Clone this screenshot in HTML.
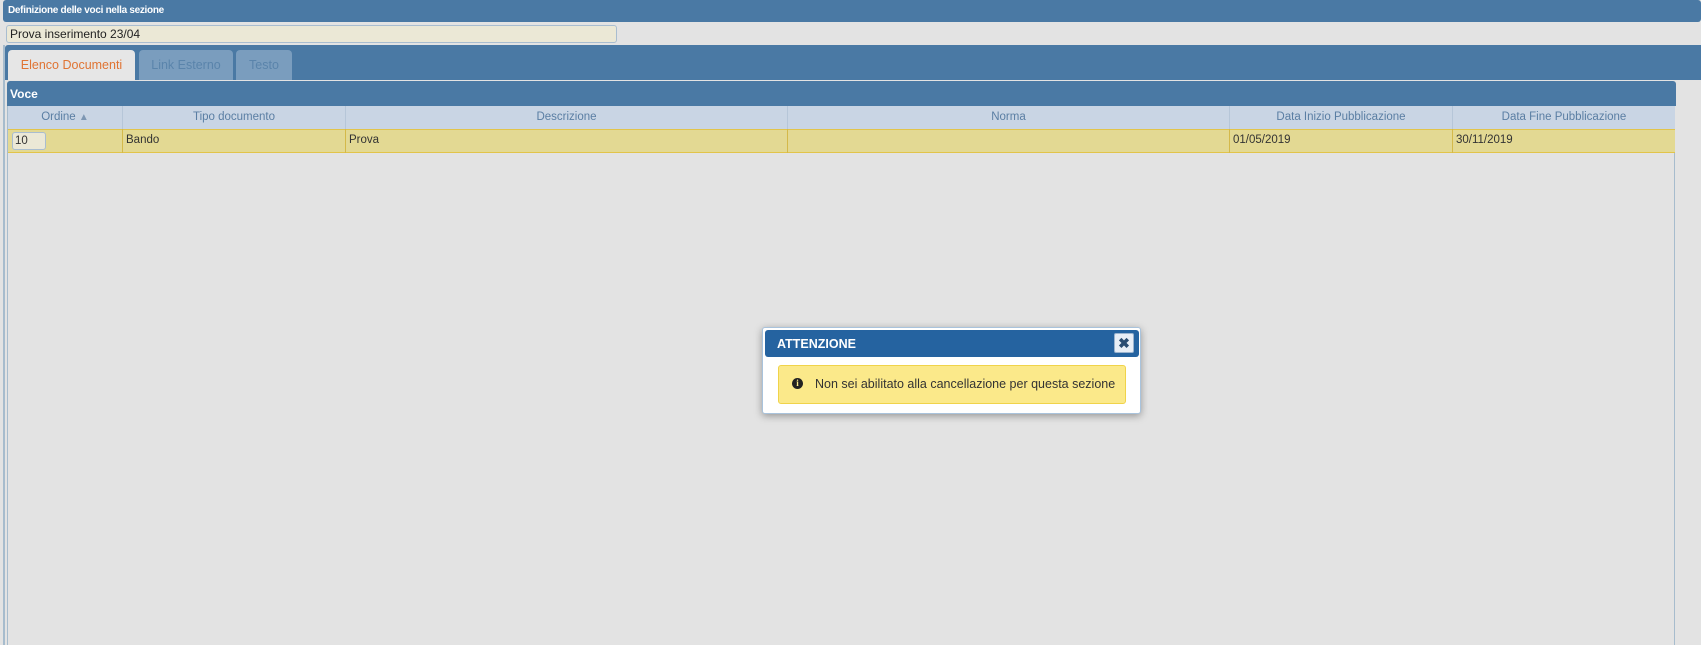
<!DOCTYPE html>
<html><head><meta charset="utf-8"><style>
*{box-sizing:border-box;margin:0;padding:0}
body{width:1701px;height:645px;background:#e3e3e3;font-family:"Liberation Sans",sans-serif;font-size:12px;color:#333;position:relative;overflow:hidden}
.abs{position:absolute}
.blue{background:#4a79a4}
</style></head><body>
<div class="abs blue" style="left:3px;top:0;width:1698px;height:22px;border-radius:3px"></div>
<div class="abs" style="left:8px;top:5px;color:#fff;font-size:10px;font-weight:bold;letter-spacing:-0.3px">Definizione delle voci nella sezione</div>
<div class="abs" style="left:6px;top:25px;width:611px;height:18px;background:#ebe8d6;border:1px solid #a9bdd0;border-radius:3px;padding:1px 3px;font-size:12px;color:#222">Prova inserimento 23/04</div>
<div class="abs" style="left:3px;top:45px;width:2px;height:600px;background:#a7bccd"></div>
<div class="abs" style="left:7px;top:93px;width:1px;height:552px;background:#a7bccd"></div>
<div class="abs" style="left:1674px;top:93px;width:1px;height:552px;background:#a7bccd"></div>
<div class="abs blue" style="left:5px;top:45px;width:1696px;height:35px;border-radius:3px 0 0 0"></div>
<div class="abs" style="left:8px;top:50px;width:127px;height:30px;background:#e6e6e6;border-radius:4px 4px 0 0;color:#e07433;font-size:12.5px;text-align:center;line-height:31px">Elenco Documenti</div>
<div class="abs" style="left:139px;top:50px;width:94px;height:30px;background:#7a9dbe;border-radius:4px 4px 0 0;color:#5a84ab;font-size:12.5px;text-align:center;line-height:31px">Link Esterno</div>
<div class="abs" style="left:236px;top:50px;width:56px;height:30px;background:#7a9dbe;border-radius:4px 4px 0 0;color:#5a84ab;font-size:12.5px;text-align:center;line-height:31px">Testo</div>
<div class="abs blue" style="left:7px;top:81px;width:1669px;height:25px;border-radius:3px 3px 0 0"></div>
<div class="abs" style="left:10px;top:87px;color:#fff;font-weight:bold;font-size:12px">Voce</div>
<div class="abs" style="left:8px;top:106px;width:1667px;height:23px;background:#c9d5e4"></div>
<div class="abs" style="left:8px;top:129px;width:1667px;height:24px;background:#e3d993;border-top:1px solid #e2c44a;border-bottom:1px solid #e2c44a"></div>
<div style="position:absolute;left:0;top:106px;font-size:11.5px;color:#5a7ea3">
<div class="abs" style="left:8px;width:114px;text-align:center;top:5px">Ordine <span style="color:#7d97b3;font-size:10px">&#9650;</span></div>
<div class="abs" style="left:122px;width:223px;text-align:center;top:0;border-left:1px solid #b6c6d8;height:23px;padding-top:5px">Tipo documento</div>
<div class="abs" style="left:345px;width:442px;text-align:center;top:0;border-left:1px solid #b6c6d8;height:23px;padding-top:5px">Descrizione</div>
<div class="abs" style="left:787px;width:442px;text-align:center;top:0;border-left:1px solid #b6c6d8;height:23px;padding-top:5px">Norma</div>
<div class="abs" style="left:1229px;width:223px;text-align:center;top:0;border-left:1px solid #b6c6d8;height:23px;padding-top:5px">Data Inizio Pubblicazione</div>
<div class="abs" style="left:1452px;width:223px;text-align:center;top:0;border-left:1px solid #b6c6d8;height:23px;padding-top:5px">Data Fine Pubblicazione</div>
</div>
<div style="position:absolute;left:0;top:129px;font-size:11.5px;color:#333">
<div class="abs" style="left:12px;top:3px;width:34px;height:18px;background:#ebe8d6;border:1px solid #a9bdd0;border-radius:3px;padding:2px 2px">10</div>
<div class="abs" style="left:122px;top:0;height:24px;border-left:1px solid #d4b94a;padding:5px 3px">Bando</div>
<div class="abs" style="left:345px;top:0;height:24px;border-left:1px solid #d4b94a;padding:5px 3px">Prova</div>
<div class="abs" style="left:787px;top:0;height:24px;border-left:1px solid #d4b94a;padding:5px 3px">&nbsp;</div>
<div class="abs" style="left:1229px;top:0;height:24px;border-left:1px solid #d4b94a;padding:5px 3px">01/05/2019</div>
<div class="abs" style="left:1452px;top:0;height:24px;border-left:1px solid #d4b94a;padding:5px 3px">30/11/2019</div>
</div>
<div class="abs" style="left:762px;top:327px;width:379px;height:87px;background:#fff;border:1px solid #a9c3dc;border-radius:3px;box-shadow:0 2px 8px rgba(0,0,0,.35)"></div>
<div class="abs" style="left:765px;top:330px;width:374px;height:27px;background:#2563a0;border-radius:3px"></div>
<div class="abs" style="left:777px;top:337px;color:#fff;font-weight:bold;font-size:12.5px">ATTENZIONE</div>
<div class="abs" style="left:1114px;top:333px;width:20px;height:20px;background:#e8eef6;border:1px solid #9bb4cf;border-radius:2px;color:#2a4d72;font-weight:bold;font-size:14px;text-align:center;line-height:18px">&#x2716;</div>
<div class="abs" style="left:778px;top:365px;width:348px;height:39px;background:#fbe98a;border:1px solid #f0d34a;border-radius:3px"></div>
<div class="abs" style="left:792px;top:378px;width:11px;height:11px;border-radius:50%;background:#222;color:#fbe98a;font-size:9px;font-weight:bold;text-align:center;line-height:11px;font-family:'Liberation Serif',serif">i</div>
<div class="abs" style="left:815px;top:377px;font-size:12.5px;color:#333">Non sei abilitato alla cancellazione per questa sezione</div>
</body></html>
